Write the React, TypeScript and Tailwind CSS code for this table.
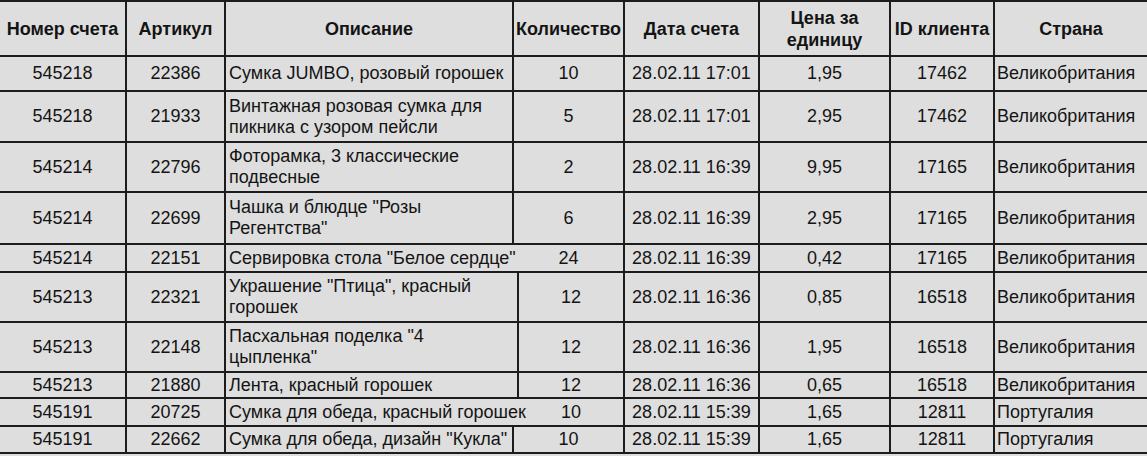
type Row = {
  inv: string
  art: string
  desc: string[]
  qty: string
  date: string
  price: string
  client: string
  country: string
  h: string
  descW?: string
  descBorder?: boolean
}

const rows: Row[] = [
  { inv: "545218", art: "22386", desc: ["Сумка JUMBO, розовый горошек"], qty: "10", date: "28.02.11 17:01", price: "1,95", client: "17462", country: "Великобритания", h: "h-[35px]" },
  { inv: "545218", art: "21933", desc: ["Винтажная розовая сумка для", "пикника с узором пейсли"], qty: "5", date: "28.02.11 17:01", price: "2,95", client: "17462", country: "Великобритания", h: "h-[51px]" },
  { inv: "545214", art: "22796", desc: ["Фоторамка, 3 классические", "подвесные"], qty: "2", date: "28.02.11 16:39", price: "9,95", client: "17165", country: "Великобритания", h: "h-[50px]" },
  { inv: "545214", art: "22699", desc: ["Чашка и блюдце \"Розы", "Регентства\""], qty: "6", date: "28.02.11 16:39", price: "2,95", client: "17165", country: "Великобритания", h: "h-[52px]" },
  { inv: "545214", art: "22151", desc: ["Сервировка стола \"Белое сердце\""], qty: "24", date: "28.02.11 16:39", price: "0,42", client: "17165", country: "Великобритания", h: "h-[28px]", descBorder: false },
  { inv: "545213", art: "22321", desc: ["Украшение \"Птица\", красный", "горошек"], qty: "12", date: "28.02.11 16:36", price: "0,85", client: "16518", country: "Великобритания", h: "h-[50px]", descW: "wide" },
  { inv: "545213", art: "22148", desc: ["Пасхальная поделка \"4", "цыпленка\""], qty: "12", date: "28.02.11 16:36", price: "1,95", client: "16518", country: "Великобритания", h: "h-[50px]", descW: "wide" },
  { inv: "545213", art: "21880", desc: ["Лента, красный горошек"], qty: "12", date: "28.02.11 16:36", price: "0,65", client: "16518", country: "Великобритания", h: "h-[26px]", descW: "wide" },
  { inv: "545191", art: "20725", desc: ["Сумка для обеда, красный горошек"], qty: "10", date: "28.02.11 15:39", price: "1,65", client: "12811", country: "Португалия", h: "h-[28px]", descW: "wide", descBorder: false },
  { inv: "545191", art: "22662", desc: ["Сумка для обеда, дизайн \"Кукла\""], qty: "10", date: "28.02.11 15:39", price: "1,65", client: "12811", country: "Португалия", h: "h-[27px]" },
]

const cell = "flex items-center border-r-2 border-[#1c1c1c] shrink-0"

export default function App() {
  return (
    <div
      className="w-[1147px] h-[456px] overflow-hidden bg-[#dedede] text-[#141414] text-[18px]"
      style={{ fontFamily: '"Liberation Sans", Arial, sans-serif' }}
    >
      <div className="flex h-[57px] border-y-2 border-[#1c1c1c] font-bold leading-[22px]">
        <div className={`${cell} w-[127px] justify-center`}>Номер счета</div>
        <div className={`${cell} w-[99px] justify-center`}>Артикул</div>
        <div className={`${cell} w-[288px] justify-center`}>Описание</div>
        <div className={`${cell} w-[111px] justify-center`}>Количество</div>
        <div className={`${cell} w-[135px] justify-center`}>Дата счета</div>
        <div className={`${cell} w-[131px] justify-center text-center`}>
          Цена за
          <br />
          единицу
        </div>
        <div className={`${cell} w-[104px] justify-center`}>ID клиента</div>
        <div className="flex items-center justify-center flex-1">Страна</div>
      </div>

      {rows.map((r, i) => (
        <div key={i} className={`flex ${r.h} border-b-2 border-[#1c1c1c] leading-[21px]`}>
          <div className={`${cell} w-[127px] justify-center`}>{r.inv}</div>
          <div className={`${cell} w-[99px] justify-center`}>{r.art}</div>
          <div
            className={`flex items-center shrink-0 pl-[3px] whitespace-nowrap ${
              r.descW === "wide" ? "w-[293px]" : "w-[288px]"
            } ${r.descBorder === false ? "" : "border-r-2 border-[#1c1c1c]"}`}
          >
            <div>
              {r.desc.map((l, j) => (
                <div key={j}>{l}</div>
              ))}
            </div>
          </div>
          <div
            className={`${cell} justify-center ${
              r.descW === "wide" ? "w-[106px]" : "w-[111px]"
            }`}
          >
            {r.qty}
          </div>
          <div className={`${cell} w-[135px] justify-center`}>{r.date}</div>
          <div className={`${cell} w-[131px] justify-center`}>{r.price}</div>
          <div className={`${cell} w-[104px] justify-center`}>{r.client}</div>
          <div className="flex items-center flex-1 pl-[2px] whitespace-nowrap">{r.country}</div>
        </div>
      ))}
    </div>
  )
}
